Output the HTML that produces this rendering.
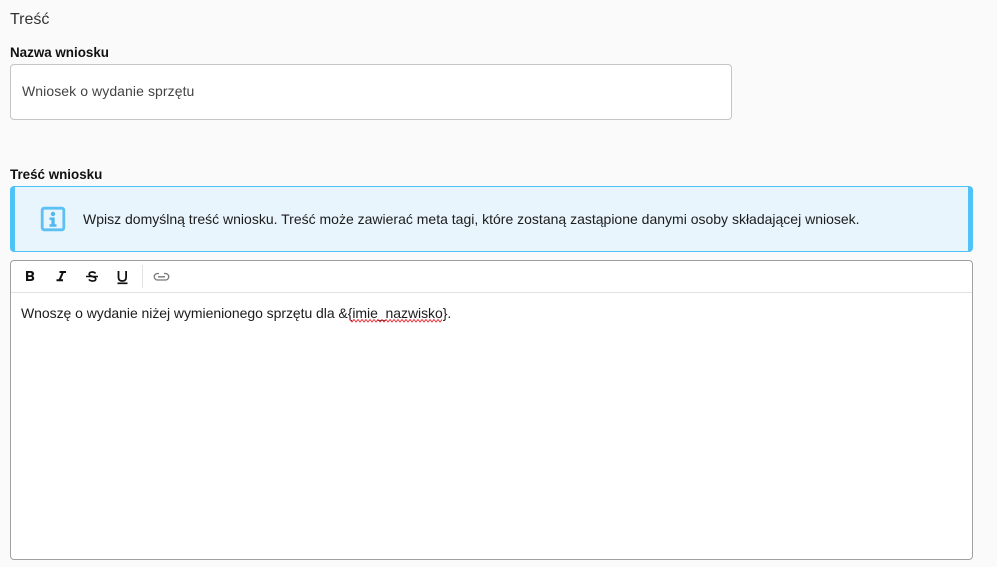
<!DOCTYPE html>
<html lang="pl"><head><meta charset="utf-8"><style>
html,body{margin:0;padding:0;width:997px;height:567px;overflow:hidden;background:#fafafa;font-family:"Liberation Sans",sans-serif;color:#1b1b1b}
.a{position:absolute;white-space:nowrap}
.b{font-weight:bold;font-size:13.4px;line-height:16px;color:#111}
</style></head><body>
<div class="a" style="left:10px;top:11px;font-size:16px;line-height:18px;color:#333">Treść</div>
<div class="a b" style="left:10px;top:44.500px">Nazwa wniosku</div>
<div class="a" style="left:10px;top:64px;width:720px;height:54px;background:#fff;border:1px solid #c4c4c4;border-radius:4px"></div>
<div class="a" style="left:22px;top:83px;font-size:14px;line-height:16px;color:#444;letter-spacing:.08px">Wniosek o wydanie sprzętu</div>
<div class="a b" style="left:10px;top:166.500px">Treść wniosku</div>
<div class="a" style="left:10px;top:186px;width:953px;height:64px;background:#e8f5fc;border:1px solid #4fc3f7;border-left-width:5px;border-right-width:5px;border-radius:4px"></div>
<svg class="a" style="left:40px;top:206px" width="26" height="26" viewBox="0 0 26 26"><rect x="2.200" y="2.200" width="21.600" height="21.600" rx="2" fill="#e8f5fc" stroke="#5cc0f5" stroke-width="2.800"/><circle cx="13" cy="8" r="2.200" fill="#4fb8ee"/><path d="M9.500 11.500h5.200V18.300H16.500v2.400H9.500v-2.400h1.900v-4.400H9.500z" fill="#4fb8ee"/></svg>
<div class="a" style="left:83px;top:211px;font-size:14px;line-height:16px;color:#1c1c1c">Wpisz domyślną treść wniosku. Treść może zawierać meta tagi, które zostaną zastąpione danymi osoby składającej wniosek.</div>
<div class="a" style="left:10px;top:260px;width:961px;height:298px;background:#fff;border:1px solid #a0a0a0;border-radius:4px"></div>
<div class="a" style="left:11px;top:292px;width:961px;height:1px;background:#e2e2e2"></div>
<div class="a" style="left:142px;top:265px;width:1px;height:23px;background:#e2e2e2"></div>
<svg class="a" style="left:20px;top:266px" width="150" height="22" viewBox="0 0 150 22" fill="none">
<path fill-rule="evenodd" fill="#111" d="M6 5h4.500C12.800 5 14 6.100 14 7.700c0 1-.5 1.800-1.400 2.200 1 .4 1.600 1.300 1.600 2.400 0 1.700-1.300 2.700-3.500 2.700H6zM8.200 6.900v2.300h2c.9 0 1.500-.4 1.500-1.200s-.5-1.100-1.500-1.100zM8.200 11v2.100h2.300c1 0 1.500-.4 1.500-1.100s-.5-1-1.500-1z"/>
<path d="M39.500 6h6.500M36.500 14.200h6.500M43 6l-3.500 8.200" stroke="#111" stroke-width="2"/>
<path d="M66 10.500h12" stroke="#111" stroke-width="1.500"/><path d="M75.500 7.500c-.6-1-1.800-1.500-3.300-1.500-1.800 0-3 .9-3 2.100 0 3.200 6.600 1.800 6.600 4.900 0 1.300-1.300 2-3.300 2-1.600 0-2.900-.5-3.500-1.600" stroke="#111" stroke-width="1.700"/>
<path d="M98.500 5v6.500c0 2.200 1.400 3.500 3.800 3.500s3.800-1.300 3.800-3.500V5" stroke="#111" stroke-width="1.800"/><path d="M97.500 17.300h10" stroke="#111" stroke-width="1.700"/>
<path d="M139 7.500h-1.500a3 3 0 0 0 0 6.500h8a3 3 0 0 0 0-6.500H144M138 10.800h7" stroke="#777" stroke-width="1.300"/>
</svg>
<div class="a" style="left:21px;top:305px;font-size:14px;line-height:16px;color:#1c1c1c;letter-spacing:-.05px">Wnoszę o wydanie niżej wymienionego sprzętu dla &amp;{imie_nazwisko}.</div>
<svg class="a" style="left:350px;top:318px" width="94" height="6" viewBox="0 0 94 6" fill="none"><path d="M0 1.500l2 2.500 2-2.500 2 2.500 2-2.500 2 2.500 2-2.500 2 2.500 2-2.500 2 2.500 2-2.500 2 2.500 2-2.500 2 2.500 2-2.500 2 2.500 2-2.500 2 2.500 2-2.500 2 2.500 2-2.500 2 2.500 2-2.500 2 2.500 2-2.500 2 2.500 2-2.500 2 2.500 2-2.500 2 2.500 2-2.500 2 2.500 2-2.500 2 2.500 2-2.500 2 2.500 2-2.500 2 2.500 2-2.500 2 2.500 2-2.500 2 2.500 2-2.500 2 2.500 2-2.500 2 2.500 2-2.500" stroke="#e8303a" stroke-width="1"/></svg>
</body></html>
